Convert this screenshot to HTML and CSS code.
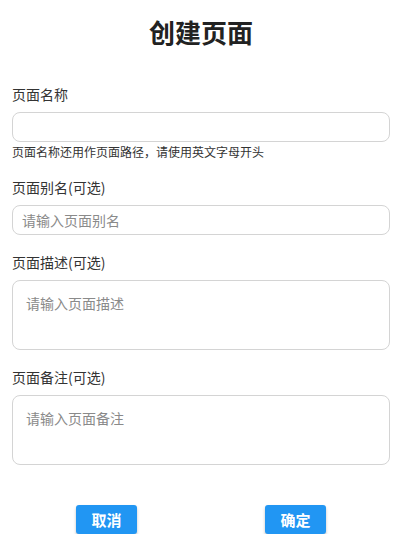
FILE: index.html
```html
<!DOCTYPE html>
<html lang="zh-CN">
<head>
<meta charset="utf-8">
<title>创建页面</title>
<link rel="stylesheet" href="styles.css">
</head>
<body>
<div class="page">
  <h1 class="title">创建页面</h1>
  <div class="field">
    <label class="label">页面名称</label>
    <input class="input" type="text">
    <div class="help">页面名称还用作页面路径，请使用英文字母开头</div>
  </div>
  <div class="field">
    <label class="label">页面别名(可选)</label>
    <input class="input" type="text" placeholder="请输入页面别名">
  </div>
  <div class="field">
    <label class="label">页面描述(可选)</label>
    <textarea class="textarea" placeholder="请输入页面描述"></textarea>
  </div>
  <div class="field">
    <label class="label">页面备注(可选)</label>
    <textarea class="textarea" placeholder="请输入页面备注"></textarea>
  </div>
  <div class="actions">
    <button class="btn">取消</button>
    <button class="btn">确定</button>
  </div>
</div>
</body>
</html>
```
FILE: styles.css
```css
html, body {
  margin: 0;
  padding: 0;
  background: #fff;
}
body {
  font-family: "Noto Sans CJK SC", "Noto Sans", sans-serif;
  color: #333;
}
.page {
  padding: 12px 12px 0;
  display: flex;
  flex-direction: column;
}
.title {
  margin: 0 0 32px;
  font-size: 26px;
  line-height: 40px;
  font-weight: 700;
  text-align: center;
  color: #222;
}
.field {
  display: flex;
  flex-direction: column;
  margin-bottom: 17px;
}
.label {
  font-size: 14px;
  line-height: 20px;
  margin-bottom: 8px;
  color: #333;
}
.input, .textarea {
  box-sizing: border-box;
  width: 100%;
  border: 1px solid #d4d4d4;
  border-radius: 8px;
  font-family: inherit;
  font-size: 14px;
  color: #333;
  outline: none;
  margin: 0;
  background: #fff;
}
.input {
  height: 30px;
  padding: 0 9px;
  line-height: 20px;
}
.textarea {
  height: 70px;
  padding: 12px 13px;
  line-height: 20px;
  resize: none;
  display: block;
}
.input::placeholder, .textarea::placeholder {
  color: #8a8a8a;
}
.help {
  font-size: 12px;
  line-height: 16px;
  margin-top: 2px;
  color: #333;
}
.actions {
  display: flex;
  justify-content: space-around;
  margin-top: 23px;
}
.btn {
  width: 61px;
  height: 29px;
  border: none;
  border-radius: 3px;
  background: #2196f3;
  color: #fff;
  font-family: inherit;
  font-size: 15px;
  font-weight: 700;
  padding: 0;
  box-shadow: 0 2px 3px rgba(0,0,0,0.25);
}
```
